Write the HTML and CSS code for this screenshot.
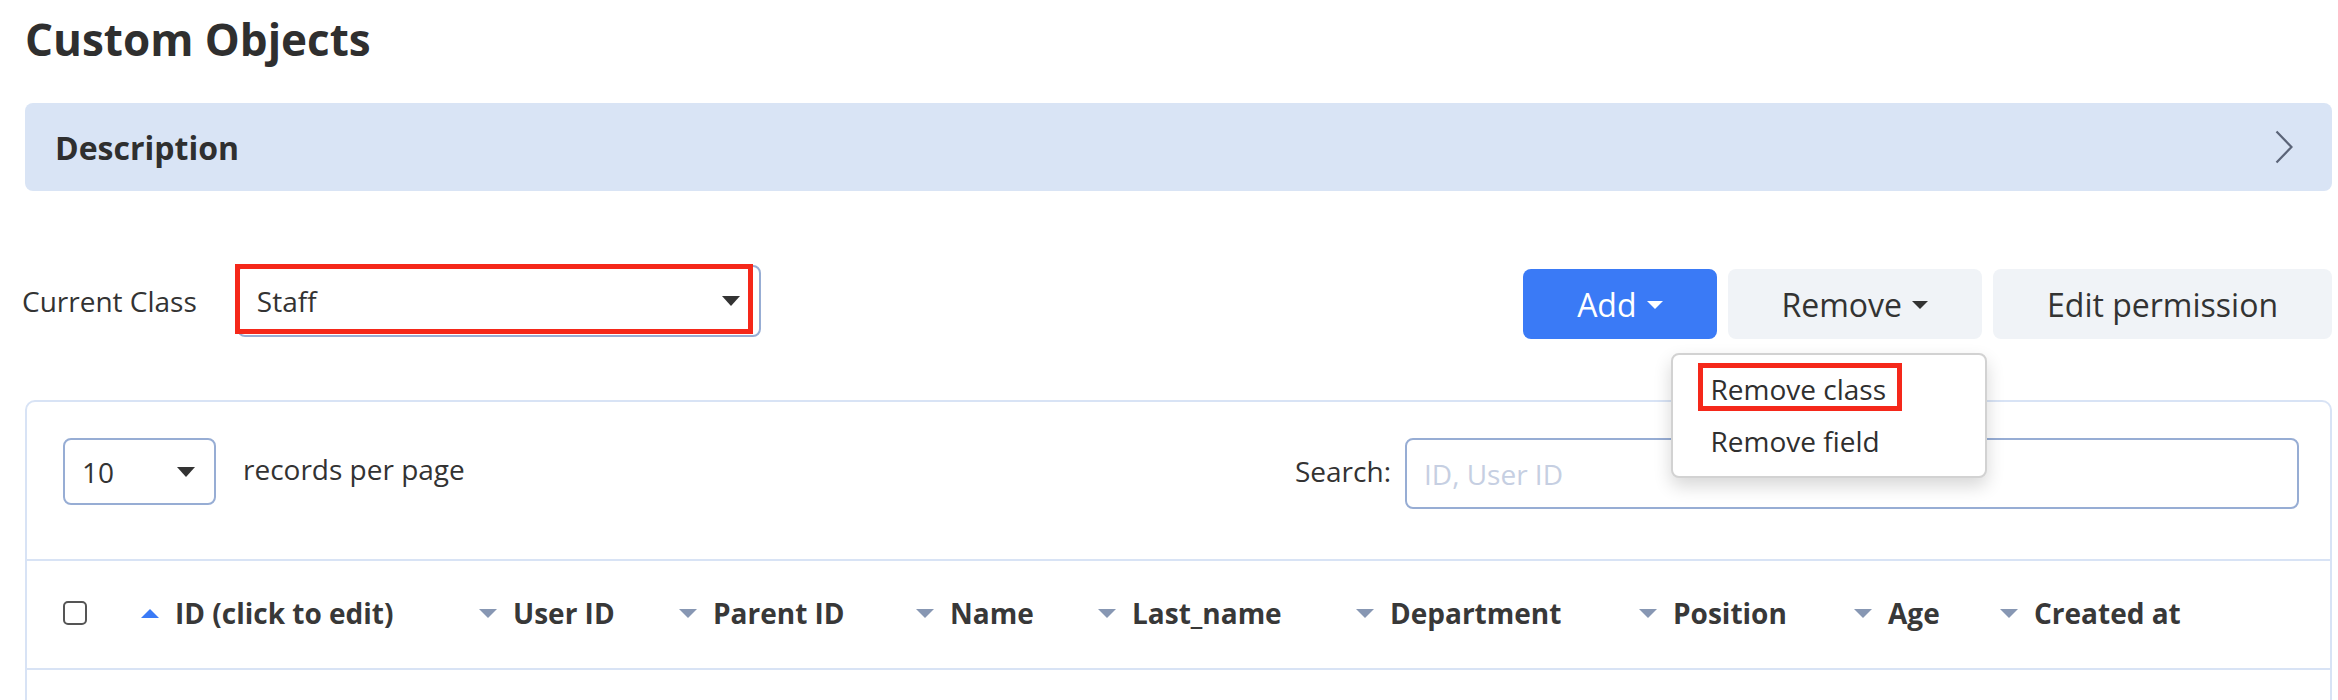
FILE: index.html
```html
<!DOCTYPE html>
<html lang="en">
<head>
<meta charset="utf-8">
<title>Custom Objects</title>
<link rel="stylesheet" href="styles.css">
</head>
<body>
<div class="page">
  <h1 class="title">Custom Objects</h1>

  <div class="desc">
    <span class="desc-label">Description</span>
    <svg class="chev" width="18" height="34" viewBox="0 0 18 34"><polyline points="1.5,1.5 16.5,17 1.5,32.5" fill="none" stroke="#5b6478" stroke-width="2.2"/></svg>
  </div>

  <div class="toolbar">
    <div class="class-group">
      <span class="class-label">Current Class</span>
      <div class="select-wrap">
        <div class="select big">
          <span>Staff</span>
          <span class="caret dark"></span>
        </div>
        <span class="annot annot-select"></span>
      </div>
    </div>
    <div class="actions">
      <button class="btn primary">Add<span class="caret white"></span></button>
      <div class="remove-wrap">
        <button class="btn light">Remove<span class="caret dark small"></span></button>
        <div class="menu">
          <div class="menu-item"><span class="boxed">Remove class</span></div>
          <div class="menu-item">Remove field</div>
        </div>
      </div>
      <button class="btn light">Edit permission</button>
    </div>
  </div>

  <div class="card">
    <div class="card-top">
      <div class="per-page">
        <div class="select small-sel">
          <span>10</span>
          <span class="caret dark"></span>
        </div>
        <span class="pp-label">records per page</span>
      </div>
      <div class="search">
        <span class="search-label">Search:</span>
        <div class="search-input">ID, User ID</div>
      </div>
    </div>
    <div class="thead">
      <div class="th"><span class="checkbox"></span></div>
      <div class="th"><span class="sort up"></span><span>ID (click to edit)</span></div>
      <div class="th"><span class="sort"></span><span>User ID</span></div>
      <div class="th"><span class="sort"></span><span>Parent ID</span></div>
      <div class="th"><span class="sort"></span><span>Name</span></div>
      <div class="th"><span class="sort"></span><span>Last_name</span></div>
      <div class="th"><span class="sort"></span><span>Department</span></div>
      <div class="th"><span class="sort"></span><span>Position</span></div>
      <div class="th"><span class="sort"></span><span>Age</span></div>
      <div class="th"><span class="sort"></span><span>Created at</span></div>
    </div>
    <div class="tbody"></div>
  </div>
</div>
</body>
</html>
```

FILE: styles.css
```css
* { box-sizing: border-box; }
html, body { margin: 0; padding: 0; background: #fff; }
body {
  font-family: "Open Sans", "Noto Sans", sans-serif;
  color: #333;
  width: 2338px;
  height: 700px;
  overflow: hidden;
}
.page {
  padding: 12px 6px 0 25px;
}
.title {
  margin: 0;
  font-size: 44px;
  font-weight: 700;
  line-height: 54px;
  color: #2f2f2f;
}
.desc {
  margin-top: 37px;
  height: 88px;
  background: #d9e4f5;
  border-radius: 8px;
  display: flex;
  align-items: center;
  justify-content: space-between;
  padding: 0 39px 0 30px;
}
.desc-label {
  font-size: 32px;
  font-weight: 700;
  color: #2f2f2f;
}
.toolbar {
  margin-top: 74px;
  margin-left: -3px;
  display: flex;
  justify-content: space-between;
  align-items: flex-start;
}
.class-group {
  display: flex;
  align-items: center;
  height: 72px;
}
.class-label {
  font-size: 28px;
  margin-right: 40px;
}
.select-wrap { position: relative; }
.select {
  display: flex;
  align-items: center;
  justify-content: space-between;
  border: 2px solid #97add4;
  border-radius: 8px;
  background: #fff;
  font-size: 28px;
  color: #333;
}
.select.big {
  width: 524px;
  height: 72px;
  padding: 0 19px 0 18px;
}
.annot {
  position: absolute;
  border: 5px solid #f5281a;
  pointer-events: none;
}
.annot-select {
  left: -2px;
  right: 8px;
  top: -1px;
  bottom: 3px;
}
.caret {
  display: inline-block;
  width: 0;
  height: 0;
  border-left: 9px solid transparent;
  border-right: 9px solid transparent;
  border-top: 10px solid #333;
}
.caret.white {
  border-left-width: 8px;
  border-right-width: 8px;
  border-top: 8px solid #fff;
  margin-left: 10px;
  position: relative;
  top: 1px;
}
.caret.small {
  border-left-width: 8px;
  border-right-width: 8px;
  border-top: 8px solid #333;
  margin-left: 10px;
  position: relative;
  top: 1px;
}
.actions {
  display: flex;
  gap: 11px;
  padding-top: 4px;
}
.btn {
  height: 70px;
  border: none;
  border-radius: 8px;
  padding: 0 54px;
  font-family: "Open Sans", "Noto Sans", sans-serif;
  font-size: 32px;
  color: #333;
  display: flex;
  align-items: center;
  white-space: nowrap;
}
.btn.primary {
  background: #3a7af6;
  color: #fff;
}
.btn.light {
  background: #f0f3f7;
}
.remove-wrap { position: relative; }
.menu {
  position: absolute;
  left: -57px;
  top: calc(100% + 14px);
  width: 316px;
  height: 125px;
  background: #fff;
  border: 2px solid #d2d2d2;
  border-radius: 8px;
  box-shadow: 0 8px 18px rgba(0, 0, 0, 0.16);
  padding: 8px 0 0 38px;
  z-index: 5;
}
.menu-item {
  font-size: 28px;
  line-height: 52px;
  color: #2f2f2f;
  white-space: nowrap;
}
.boxed { position: relative; }
.boxed::after {
  content: "";
  position: absolute;
  left: -13px;
  right: -16px;
  top: -7px;
  bottom: -3px;
  border: 5px solid #f5281a;
}
.card {
  margin-top: 61px;
  border: 2px solid #d8e3f5;
  border-radius: 10px;
  height: 320px;
}
.card-top {
  display: flex;
  justify-content: space-between;
  align-items: flex-start;
  padding: 36px 31px 0 36px;
  height: 157px;
}
.per-page {
  display: flex;
  align-items: center;
  height: 67px;
}
.select.small-sel {
  width: 153px;
  height: 67px;
  padding: 0 19px 0 17px;
}
.pp-label {
  font-size: 28px;
  margin-left: 27px;
  padding-bottom: 6px;
}
.search {
  display: flex;
  align-items: center;
}
.search-label {
  font-size: 28px;
  margin-right: 14px;
  padding-bottom: 6px;
}
.search-input {
  width: 894px;
  height: 71px;
  border: 2px solid #97add4;
  border-radius: 8px;
  font-size: 28px;
  color: #c6cfe2;
  display: flex;
  align-items: center;
  padding-left: 17px;
}
.thead {
  border-top: 2px solid #d8e3f5;
  border-bottom: 2px solid #d8e3f5;
  height: 111px;
  display: grid;
  grid-template-columns: 78px 338px 200px 237px 182px 258px 283px 215px 146px 1fr;
  align-items: center;
  padding-left: 36px;
  padding-bottom: 3px;
}
.th {
  display: flex;
  align-items: center;
  font-size: 28px;
  font-weight: 700;
  color: #383838;
  white-space: nowrap;
}
.checkbox {
  width: 24px;
  height: 24px;
  border: 2px solid #555;
  border-radius: 5px;
}
.sort {
  width: 0;
  height: 0;
  border-left: 9px solid transparent;
  border-right: 9px solid transparent;
  border-top: 9px solid #8797b3;
  margin-right: 16px;
}
.sort.up {
  border-top: none;
  border-bottom: 9px solid #3a7af6;
}
```
